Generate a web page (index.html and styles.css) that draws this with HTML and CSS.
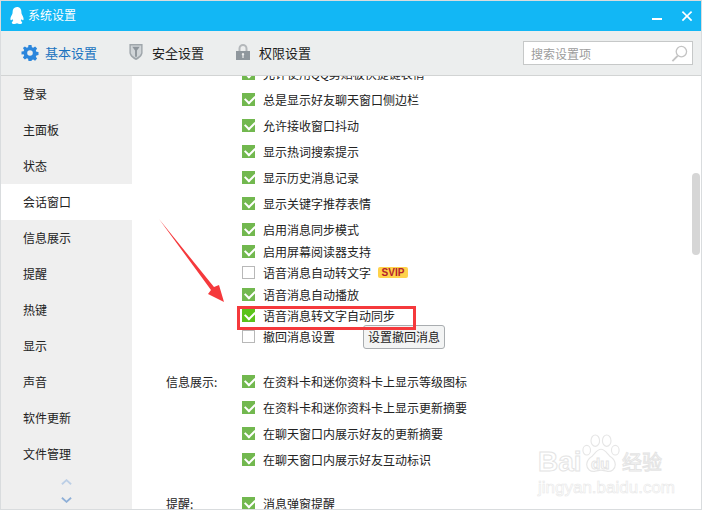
FILE: index.html
```html
<!DOCTYPE html>
<html lang="zh">
<head>
<meta charset="utf-8">
<title>系统设置</title>
<link rel="stylesheet" href="styles.css">
</head>
<body>
<div class="window">
  <header class="titlebar">
    <svg class="qq" viewBox="0 0 14 17"><path d="M7 0C4 0 2.600 2.200 2.600 5c0 .8 0 1.300-.3 2C1.500 8.500.4 10.400.4 12c0 1 .4 1.400.9 1.200.4-.1.800-.7 1-1.100.2.800.5 1.400 1 1.900-.9.400-1.500.9-1.500 1.700C1.800 16.600 3 17 4.300 17c1.100 0 2-.3 2.700-.8.700.5 1.600.8 2.700.8 1.300 0 2.500-.4 2.500-1.300 0-.8-.6-1.300-1.500-1.700.5-.5.800-1.100 1-1.900.2.400.6 1 1 1.100.5.200.9-.2.9-1.200 0-1.600-1.100-3.500-1.900-5-.3-.7-.3-1.200-.3-2C11.400 2.200 10 0 7 0z"/></svg>
    <span class="title">系统设置</span>
    <span class="controls">
      <svg class="ctl" viewBox="0 0 12 12"><rect x="1" y="8" width="10" height="2"/></svg>
      <svg class="ctl" viewBox="0 0 12 12"><path d="M2 1 6 5l4-4 1.200 1.200L7.200 6l4 4L10 11.200 6 7.200 2 11.200.8 10l4-4-4-3.800z"/></svg>
    </span>
  </header>
  <nav class="toolbar">
    <div class="tab tab-on">
      <svg class="tabicon" viewBox="0 0 16 16"><path fill="#2b86dc" fill-rule="evenodd" d="M6.500 0h3l.4 2.200 1.300.6L13.100 1.500l2 2.100-1.300 1.800.6 1.300 2.100.4v3l-2.100.4-.6 1.300 1.300 1.800-2 2.100-1.900-1.300-1.300.6L9.500 16h-3l-.4-2.200-1.300-.6-1.900 1.300-2-2.100 1.300-1.800-.6-1.300L-.5 9.600v-3l2.100-.4.600-1.300L.9 3.100l2-1.600 1.900 1.300 1.300-.6zM8 5.200a2.800 2.800 0 1 0 0 5.600 2.800 2.800 0 0 0 0-5.600z"/></svg>
      <span>基本设置</span>
    </div>
    <div class="tab">
      <svg class="tabicon" viewBox="0 0 16 17"><path fill="#9fa6ab" d="M1 0h14v9c0 3.500-3.500 6.300-7 8-3.500-1.700-7-4.500-7-8z"/><path fill="#d0d5d8" d="M2.500 1.500h11v7.300c0 2.600-2.900 4.900-5.500 6.200-2.600-1.300-5.500-3.600-5.500-6.200z"/><path fill="#8d959b" d="M4 3h8L9 7v6.500H7V7z"/></svg>
      <span>安全设置</span>
    </div>
    <div class="tab">
      <svg class="tabicon" viewBox="0 0 16 16"><path fill="none" stroke="#b4b8bb" stroke-width="2" d="M4.500 7V4.500a3.500 3.500 0 0 1 7 0V7"/><path fill="#8f979d" fill-rule="evenodd" d="M1 7h14v9H1zM8 9a1.300 1.300 0 0 0-.6 2.400V14h1.200v-2.600A1.300 1.300 0 0 0 8 9z"/></svg>
      <span>权限设置</span>
    </div>
    <div class="search">
      <span class="placeholder">搜索设置项</span>
      <svg class="lens" viewBox="0 0 18 18"><circle cx="11" cy="7" r="5.500" fill="none" stroke="#c4c4c4" stroke-width="1.400"/><path d="M7 11.500 1.500 17" stroke="#c4c4c4" stroke-width="2" fill="none"/></svg>
    </div>
  </nav>
  <div class="body">
    <aside class="sidebar">
      <div class="side-item">登录</div>
      <div class="side-item">主面板</div>
      <div class="side-item">状态</div>
      <div class="side-item side-on">会话窗口</div>
      <div class="side-item">信息展示</div>
      <div class="side-item">提醒</div>
      <div class="side-item">热键</div>
      <div class="side-item">显示</div>
      <div class="side-item">声音</div>
      <div class="side-item">软件更新</div>
      <div class="side-item">文件管理</div>
      <div class="chevrons">
        <svg class="chev" viewBox="0 0 12 6"><path d="M1 5.500 6 1l5 4.500" fill="none" stroke="#bccfe6" stroke-width="2"/></svg>
        <svg class="chev" viewBox="0 0 12 6"><path d="M1 .5 6 5l5-4.500" fill="none" stroke="#8fb0d8" stroke-width="2"/></svg>
      </div>
    </aside>
    <main class="content">
      <div class="list">
        <section class="group group-first">
          <div class="row"><span class="label"></span><i class="ck on"></i><span>允许使用QQ剪贴板快捷键表情</span></div>
          <div class="row"><span class="label"></span><i class="ck on"></i><span>总是显示好友聊天窗口侧边栏</span></div>
          <div class="row"><span class="label"></span><i class="ck on"></i><span>允许接收窗口抖动</span></div>
          <div class="row"><span class="label"></span><i class="ck on"></i><span>显示热词搜索提示</span></div>
          <div class="row"><span class="label"></span><i class="ck on"></i><span>显示历史消息记录</span></div>
          <div class="row"><span class="label"></span><i class="ck on"></i><span>显示关键字推荐表情</span></div>
          <div class="row"><span class="label"></span><i class="ck on"></i><span>启用消息同步模式</span></div>
        </section>
        <section class="group group-tight">
          <div class="row"><span class="label"></span><i class="ck on"></i><span>启用屏幕阅读器支持</span></div>
          <div class="row"><span class="label"></span><i class="ck"></i><span>语音消息自动转文字</span><b class="svip">SVIP</b></div>
          <div class="row"><span class="label"></span><i class="ck on"></i><span>语音消息自动播放</span></div>
          <div class="row"><span class="label"></span><i class="ck on bright"></i><span>语音消息转文字自动同步</span></div>
          <div class="row"><span class="label"></span><i class="ck"></i><span>撤回消息设置</span><button class="btn">设置撤回消息</button></div>
        </section>
        <section class="group group-info">
          <div class="row"><span class="label">信息展示:</span><i class="ck on"></i><span>在资料卡和迷你资料卡上显示等级图标</span></div>
          <div class="row"><span class="label"></span><i class="ck on"></i><span>在资料卡和迷你资料卡上显示更新摘要</span></div>
          <div class="row"><span class="label"></span><i class="ck on"></i><span>在聊天窗口内展示好友的更新摘要</span></div>
          <div class="row"><span class="label"></span><i class="ck on"></i><span>在聊天窗口内展示好友互动标识</span></div>
        </section>
        <section class="group group-remind">
          <div class="row"><span class="label">提醒:</span><i class="ck on"></i><span>消息弹窗提醒</span></div>
        </section>
      </div>
      <div class="track"><div class="thumb"></div></div>
    </main>
  </div>
  <div class="redbox"></div>
  <svg class="arrow" viewBox="0 0 70 86"><path fill="#f5393c" d="M1 1 56 69 61 67 66 84 50 76 53 72z"/></svg>
  <div class="watermark">
    <svg class="paw" viewBox="0 0 42 42"><g fill="#fff" stroke="#e6e6e6" stroke-width="1.200"><ellipse cx="6" cy="17" rx="4" ry="5"/><ellipse cx="15" cy="7" rx="4.500" ry="6"/><ellipse cx="27" cy="7" rx="4.500" ry="6"/><ellipse cx="36" cy="17" rx="4" ry="5"/><path d="M21 16c-4 0-6 4-9 7-3 2-6 5-6 9 0 5 4 8 9 7 2 0 4-1 6-1s4 1 6 1c5 1 9-2 9-7 0-4-3-7-6-9-3-3-5-7-9-7z"/></g></svg>
    <span class="wm-bai">Bai</span>
    <span class="wm-du">du</span>
    <span class="wm-jy">经验</span>
    <span class="wm-url">jingyan.baidu.com</span>
  </div>
</div>
</body>
</html>
```
FILE: styles.css
```css
* { box-sizing: border-box; }
html, body { margin: 0; padding: 0; }
body {
  width: 702px;
  height: 510px;
  overflow: hidden;
  background: #d9dcde;
  font-family: "Noto Sans CJK SC", "Liberation Sans", sans-serif;
  font-size: 12px;
  color: #222;
}
.window {
  position: relative;
  margin: 1px;
  width: 700px;
  height: 508px;
  background: #fff;
  display: flex;
  flex-direction: column;
  overflow: hidden;
}
.titlebar {
  height: 30px;
  flex: none;
  background: #12b7f5;
  display: flex;
  align-items: center;
  padding: 0 0 1px 9px;
  color: #fff;
}
.qq { width: 14px; height: 17px; fill: #fff; margin-right: 4px; }
.title { font-size: 12px; padding-bottom: 2px; }
.controls { margin-left: auto; display: flex; gap: 18px; padding-right: 8px; }
.ctl { width: 12px; height: 12px; fill: #fff; }
.toolbar {
  height: 45px;
  flex: none;
  background: #eceeee;
  border-bottom: 1px solid #d2d4d4;
  display: flex;
  align-items: center;
  padding-left: 21px;
  padding-right: 8px;
  font-size: 13px;
}
.tab { display: flex; align-items: center; gap: 8px; margin: 0 31px 2px 0; color: #1c1c1c; }
.tab-on { color: #1a73bf; gap: 7px; }
.tab-on .tabicon { margin-top: 2px; }
.tabicon { width: 16px; height: 16px; overflow: visible; }
.search {
  margin-left: auto;
  width: 170px;
  height: 24px;
  background: #fff;
  border: 1px solid #c6c8c8;
  display: flex;
  align-items: center;
  justify-content: space-between;
  padding: 0 4px 0 7px;
  font-size: 12px;
  color: #9c9c9c;
}
.lens { width: 17px; height: 17px; }
.body { flex: 1; display: flex; min-height: 0; }
.sidebar {
  width: 131px;
  flex: none;
  background: #efefef;
  display: flex;
  flex-direction: column;
}
.side-item {
  height: 36px;
  flex: none;
  display: flex;
  align-items: center;
  padding: 0 0 2px 22px;
  color: #222;
}
.side-on { background: #fff; }
.chevrons {
  display: flex;
  flex-direction: column;
  align-items: center;
  gap: 12px;
  padding-top: 7px;
}
.chev { width: 11px; height: 6px; }
.content { flex: 1; display: flex; min-width: 0; background: #fff; overflow: hidden; }
.list { flex: 1; padding-left: 34px; margin-top: -13px; }
.group { display: flex; flex-direction: column; }
.group-first { gap: 5px; }
.group-tight { margin-top: 1px; gap: 0.25px; }
.group-info { margin-top: 24px; gap: 5px; }
.group-remind { margin-top: 23px; }
.row { height: 21px; flex: none; display: flex; align-items: center; white-space: nowrap; }
.label { width: 76px; flex: none; }
.ck {
  position: relative;
  width: 13px;
  height: 13px;
  flex: none;
  margin-right: 8px;
  background: #fff;
  border: 1px solid #b8b8b8;
}
.ck.on { background: #72b84f; border: 0; }
.ck.bright { background: #5ac31a; }
.ck.on::after {
  content: "";
  position: absolute;
  left: 2.500px;
  top: 2px;
  width: 8px;
  height: 5px;
  border-left: 2px solid #fff;
  border-bottom: 2px solid #fff;
  transform: rotate(-45deg);
}
.svip {
  margin-left: 7px;
  width: 30px;
  height: 11px;
  background: #ffd24a;
  border-radius: 2px;
  color: #b3202c;
  font-family: "Liberation Sans", sans-serif;
  font-size: 10px;
  font-weight: 700;
  line-height: 11px;
  text-align: center;
}
.btn {
  margin-left: 28px;
  width: 82px;
  height: 24px;
  padding: 0;
  background: #f3f4f4;
  border: 1px solid #a9adb0;
  border-radius: 3px;
  font: inherit;
  color: #222;
  position: relative;
  z-index: 0;
}
.track { width: 9px; flex: none; padding-top: 97px; }
.thumb { width: 8px; height: 82px; background: #d6d6d6; border-radius: 4px; }
.redbox {
  position: absolute;
  left: 236px;
  top: 305px;
  width: 179px;
  height: 24px;
  border: 3px solid #f5393c;
}
.arrow {
  position: absolute;
  left: 157px;
  top: 217px;
  width: 70px;
  height: 86px;
}
.watermark {
  position: absolute;
  left: 530px;
  top: 430px;
  width: 150px;
  height: 70px;
  color: #fff;
  -webkit-text-stroke: 1px #e4e4e4;
  pointer-events: none;
}
.paw { position: absolute; left: 50px; top: 3px; width: 40px; height: 40px; }
.wm-bai {
  position: absolute;
  left: 7px;
  top: 15px;
  font-family: "Liberation Sans", sans-serif;
  font-size: 28px;
  font-weight: 700;
  line-height: 32px;
}
.wm-du {
  position: absolute;
  left: 60px;
  top: 25px;
  font-family: "Liberation Sans", sans-serif;
  font-size: 15px;
  font-weight: 700;
  line-height: 16px;
}
.wm-jy { position: absolute; left: 91px; top: 19px; font-size: 20px; line-height: 24px; }
.wm-url {
  position: absolute;
  left: 7px;
  top: 49px;
  font-family: "Liberation Sans", sans-serif;
  font-size: 17px;
  line-height: 16px;
  -webkit-text-stroke: 0.600px #e8e8e8;
}
```
